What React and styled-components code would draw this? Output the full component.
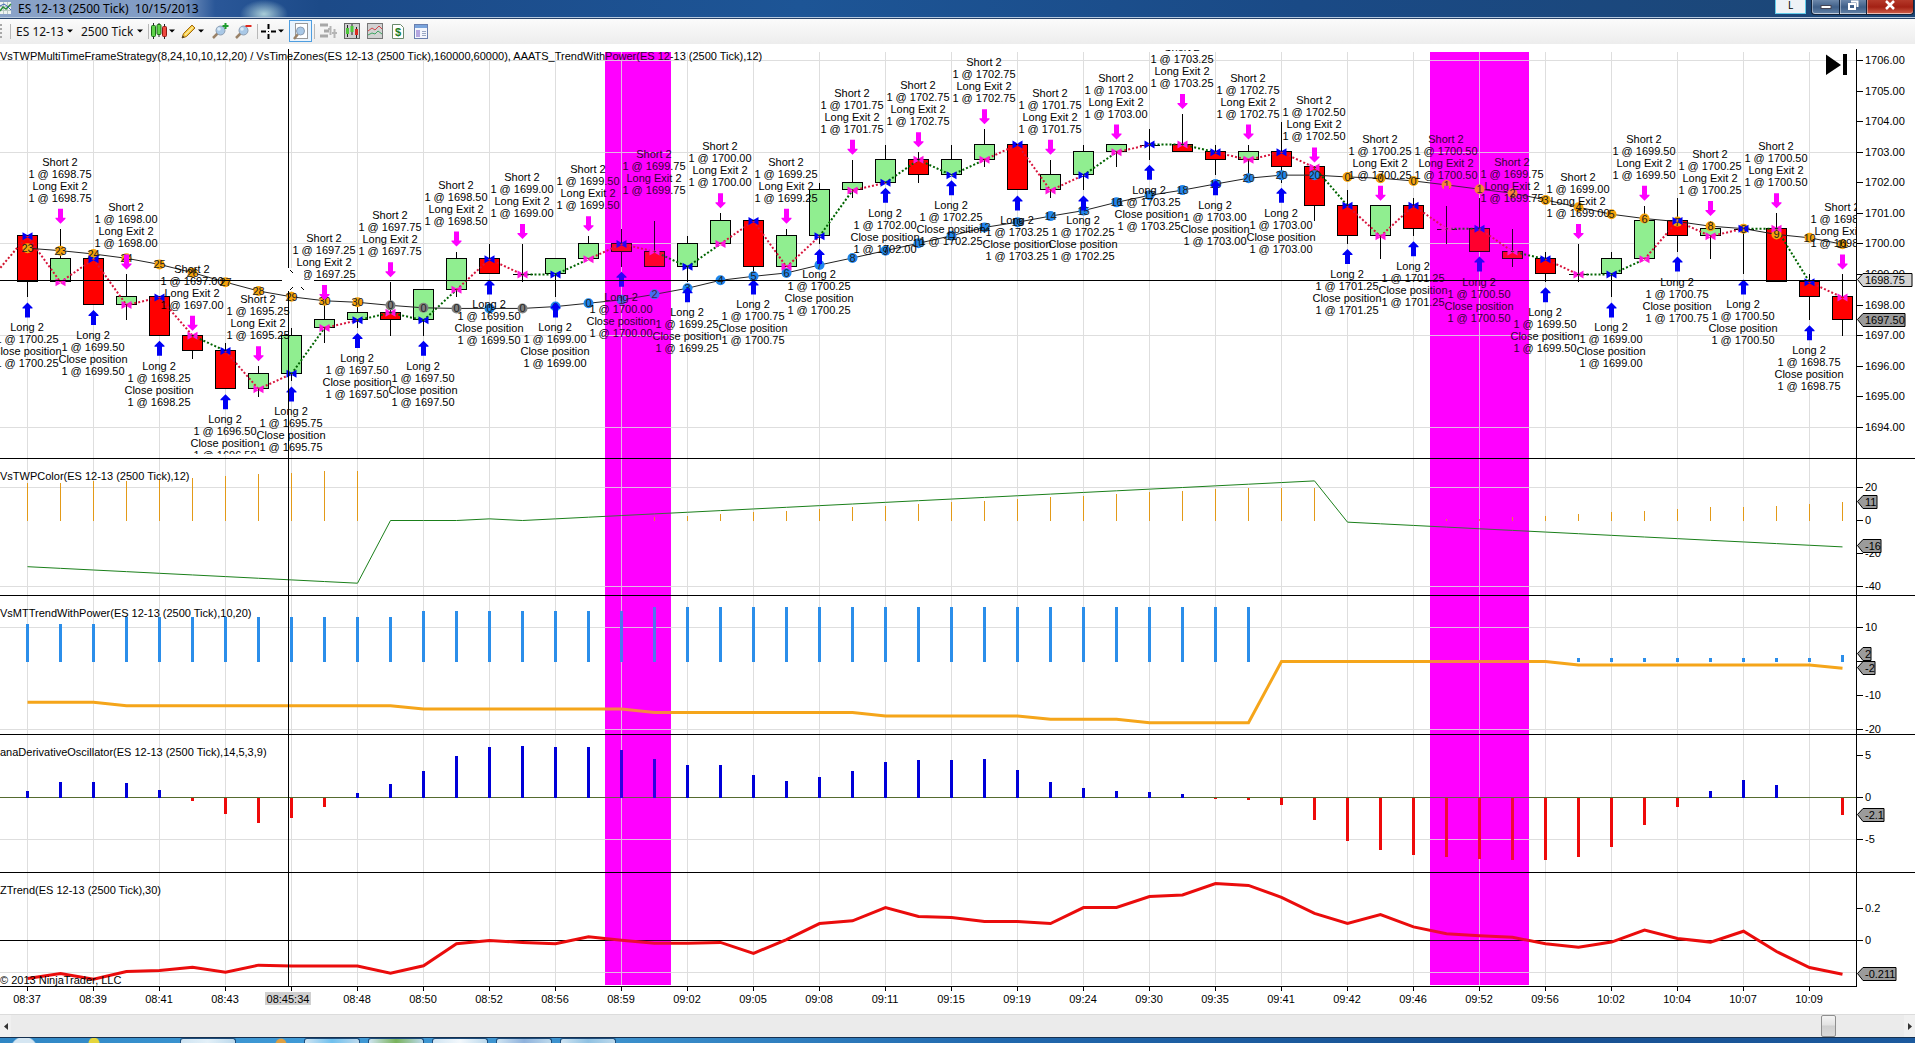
import styled, { createGlobalStyle } from 'styled-components'

const GlobalStyle = createGlobalStyle`
* {
  box-sizing: border-box;
}
body {
  margin: 0;
  background: #fff;
  overflow: hidden;
  font-family: "Liberation Sans", Arial, sans-serif;
  font-size: 11px;
  color: #000;
}
`

const Window = styled.div`
display: flex;
flex-direction: column;
min-height: 100vh;
`

const TitleBar = styled.header`
display: flex;
align-items: flex-start;
justify-content: space-between;
height: 19px;
border-bottom: 1px solid #27436a;
box-shadow: inset 0 -1px 0 #b9cbe0;
background:
  radial-gradient(ellipse 24px 14px at 264px 14px, #a9cdd8, transparent),
  linear-gradient(90deg, #8ba3c8 0, #7f9bc4 180px, #2a5798 215px, #1c4a88 320px, #1d5596 800px, #1a4a86 1300px, #1c4675 100%);
`

const Title = styled.h1`
display: flex;
align-items: center;
gap: 6px;
margin: 0;
height: 16px;
font: 12px "Noto Sans", sans-serif;
white-space: pre;
`

const WindowButtons = styled.div`
display: flex;
padding-right: 1px;
`

const LinkButton = styled.button`
width: 31px;
height: 14px;
margin-right: 5px;
padding: 0 0 3px;
border: 1px solid #62cdea;
border-top: 0;
background: #eef2f6;
font: 10px/10px "Noto Sans", sans-serif;
`

const CaptionButton = styled.button`
display: flex;
justify-content: center;
width: ${(p) => p.$width}px;
height: 15px;
padding: 0;
border: 1px solid #14233a;
border-top: 0;
border-left-width: ${(p) => (p.$first ? 1 : 0)}px;
border-radius: ${(p) => (p.$first ? '0 0 0 4px' : p.$close ? '0 0 4px 0' : 0)};
box-shadow: inset 0 -1px 0 rgba(255, 255, 255, 0.6), inset 1px 0 0 rgba(255, 255, 255, 0.4);
background: ${(p) =>
  p.$close
    ? 'linear-gradient(#b5392a, #a32114 50%, #d2604a)'
    : 'linear-gradient(#6c87aa, #3f5f88 50%, #6483a8)'};
`

const Toolbar = styled.div`
display: flex;
align-items: center;
height: 25px;
padding-bottom: 1px;
background: linear-gradient(#fbfbfb, #ededed);
`

const Grip = styled.span`
width: 2px;
height: 15px;
margin-right: 7px;
background: repeating-linear-gradient(#a8a8a8 0 2px, transparent 2px 4px);
`

const Separator = styled.span`
width: 1px;
height: 15px;
margin: 0 ${(p) => p.$gap}px;
background: #b8b8b8;
`

const Picker = styled.label`
display: flex;
align-items: center;
gap: 4px;
margin: 0 4px;
`

const Select = styled.select`
appearance: none;
width: ${(p) => p.$width}px;
padding: 0;
border: 0;
background: none;
color: #111;
font: 12px "Noto Sans", sans-serif;
`

const ToolButton = styled.button`
display: flex;
align-items: center;
justify-content: center;
gap: 2px;
min-width: 23px;
height: 22px;
margin-right: ${(p) => (p.$menu ? 4 : 0)}px;
padding: 0;
border: 1px solid ${(p) => (p.$active ? '#4f9ee0' : 'transparent')};
background: ${(p) => (p.$active ? '#eaf4fd' : 'none')};
`

const Charts = styled.main`
display: flex;
flex-direction: column;
`

const PaneRow = styled.section`
position: relative;
display: flex;
height: ${(p) => p.$height}px;
border-bottom: 1px solid #000;
`

const LastPaneRow = styled(PaneRow)`
border-bottom: 0;
`

const Plot = styled.svg`
flex: 1;
min-width: 0;
height: 100%;
font-size: 11px;
`

const Axis = styled.svg`
flex: none;
width: 59px;
height: 100%;
font-size: 11px;
`

const GoToLast = styled.button`
position: absolute;
top: 10px;
right: 68px;
width: 22px;
height: 22px;
padding: 0;
border: 0;
background: none;
`

const TimeAxis = styled.svg`
display: block;
width: 100%;
height: 27px;
font-size: 11px;
`

const ScrollRow = styled.div`
display: flex;
align-items: center;
height: 23px;
background: #ebebeb;
border-top: 1px solid #dcdcdc;
`

const ScrollArrow = styled.button`
display: flex;
align-items: center;
justify-content: center;
width: 11px;
height: 22px;
padding: 0;
border: 0;
background: #f0f0f0;
`

const ScrollRange = styled.input`
appearance: none;
flex: 1;
height: 22px;
margin: 0;
background: none;
&::-webkit-slider-thumb {
  appearance: none;
  width: 15px;
  height: 22px;
  border: 1px solid #8f8f8f;
  border-radius: 2px;
  background: linear-gradient(#f4f4f4, #e2e2e2 45%, #cfcfcf 50%, #dadada);
}
`

const Taskbar = styled.footer`
display: flex;
gap: 8px;
height: 6px;
padding-left: 180px;
border-top: 1px solid #16304f;
background:
  radial-gradient(circle 14px at 24px 12px, #d5e6f2 90%, transparent),
  radial-gradient(circle 6px at 94px 5px, #e5d63c 80%, transparent),
  radial-gradient(circle 6px at 281px 6px, #e0a040 80%, transparent),
  linear-gradient(90deg, #2f86c4, #3f9ad6 300px, #3b90cc 620px, #2168ad 1000px, #174f90 1500px, #1c5a9e);
`

const Task = styled.span`
width: 56px;
margin-left: ${(p) => p.$gap || 0}px;
border: 1px solid #1d4d7c;
border-bottom: 0;
border-radius: 3px 3px 0 0;
background: linear-gradient(90deg, #cfe4f2, ${(p) => p.$tint || '#8fc1e2'}, #bcd9ec);
`

// open, high, low, close
const bars = [
  [1700.25, 1700.25, 1698.25, 1698.75],
  [1698.75, 1700.5, 1698.75, 1699.5],
  [1699.5, 1699.5, 1698, 1698],
  [1698, 1699, 1697.5, 1698.25],
  [1698.25, 1698.25, 1697, 1697],
  [1697, 1697, 1696.25, 1696.5],
  [1696.5, 1696.75, 1695.25, 1695.25],
  [1695.25, 1696, 1695, 1695.75],
  [1695.75, 1697.25, 1695.5, 1697],
  [1697.25, 1698, 1696.75, 1697.5],
  [1697.5, 1698, 1697.25, 1697.75],
  [1697.75, 1698.75, 1697, 1697.5],
  [1697.5, 1698.5, 1697, 1698.5],
  [1698.5, 1699.75, 1698.25, 1699.5],
  [1699.5, 1700, 1699, 1699],
  [1699, 1700, 1698.75, 1699],
  [1699, 1699.5, 1698.25, 1699.5],
  [1699.5, 1700.25, 1699.5, 1700],
  [1700, 1700.5, 1699.25, 1699.75],
  [1699.75, 1700.75, 1699.25, 1699.25],
  [1699.25, 1700.25, 1698.75, 1700],
  [1700, 1701, 1700, 1700.75],
  [1700.75, 1700.75, 1699, 1699.25],
  [1699.25, 1700.5, 1699.25, 1700.25],
  [1700.25, 1702, 1700, 1701.75],
  [1701.75, 1702.75, 1701.5, 1702],
  [1702, 1703.25, 1702, 1702.75],
  [1702.75, 1703, 1702, 1702.25],
  [1702.25, 1703.25, 1702.25, 1702.75],
  [1702.75, 1703.75, 1702.5, 1703.25],
  [1703.25, 1703.25, 1701.75, 1701.75],
  [1701.75, 1702.75, 1701.5, 1702.25],
  [1702.25, 1703.25, 1701.75, 1703],
  [1703, 1703.25, 1702.5, 1703.25],
  [1703.25, 1703.75, 1702.75, 1703.25],
  [1703.25, 1704.25, 1703, 1703],
  [1703, 1703.25, 1702.25, 1702.75],
  [1702.75, 1703.25, 1702.25, 1703],
  [1703, 1704, 1702, 1702.5],
  [1702.5, 1702.5, 1700.75, 1701.25],
  [1701.25, 1701.75, 1700, 1700.25],
  [1700.25, 1701.25, 1699.5, 1701.25],
  [1701.25, 1701.5, 1700.25, 1700.5],
  [1700.5, 1701.25, 1700, 1700.5],
  [1700.5, 1701.5, 1699.75, 1699.75],
  [1699.75, 1700.5, 1699.25, 1699.5],
  [1699.5, 1699.75, 1698.75, 1699],
  [1699, 1700, 1698.75, 1699],
  [1699, 1699.75, 1698.25, 1699.5],
  [1699.5, 1701.25, 1699.5, 1700.75],
  [1700.75, 1701.5, 1699.75, 1700.25],
  [1700.25, 1700.75, 1699.5, 1700.5],
  [1700.5, 1700.5, 1699, 1700.5],
  [1700.5, 1701, 1698.75, 1698.75],
  [1698.75, 1699, 1697.5, 1698.25],
  [1698.25, 1699, 1697, 1697.5],
]

// long entries on even bars, short entries on odd bars
const entries = [
  1700.25, 1698.75, 1699.5, 1698, 1698.25, 1697, 1696.5, 1695.25, 1695.75, 1697.25,
  1697.5, 1697.75, 1697.5, 1698.5, 1699.5, 1699, 1699, 1699.5, 1700, 1699.75,
  1699.25, 1700, 1700.75, 1699.25, 1700.25, 1701.75, 1702, 1702.75, 1702.25, 1702.75,
  1703.25, 1701.75, 1702.25, 1703, 1703.25, 1703.25, 1703, 1702.75, 1703, 1702.5,
  1701.25, 1700.25, 1701.25, 1700.5, 1700.5, 1699.75, 1699.5, 1699, 1699, 1699.5,
  1700.75, 1700.25, 1700.5, 1700.5, 1698.75, 1698.25,
]

// L = losing leg, W = winning leg
const legs = 'LLLLLWLLWLWWWLLWWLLWWLLLWLWWWLLLWLWWLLLWLLLWLWLWWLLLWWL'

const average = [
  1699.86, 1699.78, 1699.67, 1699.53, 1699.33, 1699.06, 1698.75, 1698.46, 1698.27, 1698.14,
  1698.09, 1697.99, 1697.91, 1697.89, 1697.89, 1697.89, 1697.95, 1698.06, 1698.17, 1698.35,
  1698.55, 1698.81, 1698.94, 1699.05, 1699.31, 1699.54, 1699.78, 1700.02, 1700.27, 1700.54,
  1700.71, 1700.91, 1701.09, 1701.36, 1701.59, 1701.76, 1701.96, 1702.15, 1702.25, 1702.25,
  1702.19, 1702.15, 1702.06, 1701.93, 1701.79, 1701.66, 1701.44, 1701.2, 1700.97, 1700.83,
  1700.73, 1700.58, 1700.5, 1700.31, 1700.2, 1699.99,
]

const power = [
  23, 23, 24, 24, 25, 26, 27, 28, 29, 30, 30, 0, 0, 0, 0, 0, 0, 0, 1, 2,
  3, 4, 5, 6, 7, 8, 9, 10, 11, 12, 13, 14, 15, 16, 17, 18, 19, 20, 20, 20,
  0, 0, 0, 1, 1, 2, 3, 4, 5, 6, 7, 8, 8, 9, 10, 11,
]

const powerLine = power.map((_, i) => (i <= 10 ? -28 - i : i <= 13 ? 0 : i === 14 ? 1 : i <= 39 ? i - 15 : 39 - i))

const repeat = (runs) => runs.flatMap(([value, count]) => Array(count).fill(value))
const trendBars = repeat([[11, 3], [13, 9], [15, 7], [16, 19], [0, 9], [1, 8], [2, 1]])
const trendLine = repeat([[-12, 3], [-13, 9], [-14, 7], [-15, 7], [-16, 5], [-17, 3], [-18, 4], [0, 9], [-1, 8], [-2, 1]])

const oscillator = [
  0.8, 1.9, 1.9, 1.75, 0.9, -0.4, -2, -3, -2.4, -1.1, 0.5, 1.6, 3.1, 5, 6, 6.1, 6, 6, 5.6, 4.6,
  3.85, 3.85, 2.7, 1.95, 2.4, 3.1, 4.2, 4.45, 4.45, 4.6, 3.25, 1.8, 1.1, 0.75, 0.65, 0.4, -0.2, -0.3, -0.9, -2.7,
  -5.2, -6.2, -6.9, -7.1, -7.3, -7.4, -7.4, -7.1, -5.9, -3.3, -1.1, 0.75, 2.1, 1.5, -0.1, -2.1,
]

const zTrend = [
  -0.237, -0.206, -0.242, -0.194, -0.187, -0.167, -0.198, -0.154, -0.16, -0.16, -0.16, -0.204, -0.158, -0.02,
  0, -0.012, -0.02, 0.023, 0.002, -0.017, -0.017, -0.012, -0.08, 0.006, 0.106, 0.123, 0.206, 0.15,
  0.144, 0.119, 0.119, 0.106, 0.206, 0.206, 0.275, 0.285, 0.356, 0.344, 0.27, 0.169, 0.106, 0.162,
  0.085, 0.042, 0.03, 0.02, -0.02, -0.042, -0.01, 0.065, 0.013, -0.01, 0.058, -0.069, -0.169, -0.211,
]

const times = [
  '08:37', '08:39', '08:41', '08:43', '', '08:48', '08:50', '08:52', '08:56', '08:59',
  '09:02', '09:05', '09:08', '09:11', '09:15', '09:19', '09:24', '09:30', '09:35', '09:41',
  '09:42', '09:46', '09:52', '09:56', '10:02', '10:04', '10:07', '10:09',
]

const zones = [[18, 19], [43, 45]]

const BLUE = '#0000f5'
const PINK = '#ff00ff'

const barX = (i) => 27 + 33 * i
const priceY = (p) => 16.5 + (1706 - p) * 30.57
const powerY = (v) => 61.5 - v * 1.65
const trendY = (v) => 65.5 - v * 3.4
const oscY = (v) => 62.5 - v * 8.4
const zY = (v) => 67.5 - v * 160

const points = (values, y) => values.map((v, i) => `${barX(i) + 0.5},${y(v)}`).join(' ')

const Zones = ({ top, height, opacity }) =>
  zones.map(([from, to]) => (
    <rect key={from} x={barX(from) - 16} y={top} width={33 * (to - from + 1)} height={height} fill={PINK} opacity={opacity} />
  ))

const Pane = ({ height, top = 0, bottom = height, label, grid, y, ticks, format, tags, last, overlay, children }) => {
  const Row = last ? LastPaneRow : PaneRow
  return (
    <Row $height={height}>
      <Plot role="img" aria-label={label}>
        <Zones top={top} height={bottom - top} />
        <g stroke="#dedede" shapeRendering="crispEdges">
          {times.map((_, i) => (
            <line key={i} x1={barX(i * 2) + 0.5} x2={barX(i * 2) + 0.5} y1={top} y2={bottom} />
          ))}
          {grid.map((v) => (
            <line key={v} x1="0" x2="100%" y1={y(v)} y2={y(v)} />
          ))}
        </g>
        {children}
        <text x="0" y={top ? 16 : 21}>{label}</text>
        <Zones top={top} height={bottom - top} opacity="0.18" />
        <line x1="288.5" x2="288.5" y1={top ? 5 : 0} y2={height} stroke="#000" shapeRendering="crispEdges" />
        {overlay}
      </Plot>
      <Axis>
        <line x1="0.5" x2="0.5" y1={top ? 5 : 0} y2={height} stroke="#000" shapeRendering="crispEdges" />
        {ticks.map((v) => (
          <g key={v}>
            <line x1="1" x2="7" y1={y(v)} y2={y(v)} stroke="#000" shapeRendering="crispEdges" />
            <text x="9" y={Math.floor(y(v)) + 4}>{format ? format(v) : v}</text>
          </g>
        ))}
        {tags.map(({ value, text, width, fill = '#9b9b9b' }) => (
          <g key={text} transform={`translate(1 ${Math.floor(y(value)) - 0.5})`}>
            <path d={`M0.5 0 L6 -6 H${width} V7 H6 Z`} fill={fill} stroke="#000" />
            <text x="8" y="4">{text}</text>
          </g>
        ))}
      </Axis>
      {top > 0 && (
        <GoToLast aria-label="Go to last bar">
          <svg width="22" height="22">
            <path d="M1 0.5 L16 11 L1 21 Z M18 0 H22 V21 H18 Z" />
          </svg>
        </GoToLast>
      )}
    </Row>
  )
}

const Histogram = ({ values, y, width, color, negative }) => (
  <g shapeRendering="crispEdges">
    {values.map((v, i) => v !== 0 && (
      <rect
        key={i}
        x={barX(i) - (width - 1) / 2}
        y={Math.min(y(v), y(0))}
        width={width}
        height={Math.abs(y(v) - y(0))}
        fill={v < 0 ? negative : color}
      />
    ))}
  </g>
)

const Candle = ({ i, bar }) => {
  const [open, high, low, close] = bar
  const x = barX(i) + 0.5
  const top = Math.round(priceY(Math.max(open, close)))
  const bottom = Math.round(priceY(Math.min(open, close)))
  return (
    <g stroke="#000" shapeRendering="crispEdges">
      <line x1={x} x2={x} y1={priceY(high)} y2={priceY(low)} />
      {open === close ? (
        <line x1={x - 10} x2={x + 10} y1={top + 0.5} y2={top + 0.5} />
      ) : (
        <rect x={x - 10} y={top - 0.5} width="20" height={bottom - top} fill={close > open ? '#90ee90' : '#ff0000'} />
      )}
    </g>
  )
}

const Entry = ({ i, price, bar }) => {
  const isLong = i % 2 === 0
  const x = barX(i) + 0.5
  const y = priceY(price)
  const arrowY = isLong ? priceY(bar[2]) + 5 : priceY(bar[1]) - 5
  const d = isLong ? 1 : -1
  const textY = Math.round(isLong ? arrowY + 29 : arrowY - 58)
  const value = `1 @ ${price.toFixed(2)}`
  const lines = isLong ? ['Long 2', value, 'Close position', value] : ['Short 2', value, 'Long Exit 2', value]
  return (
    <g>
      <path
        d={`M${x - 5} ${y - 4} L${x + 2} ${y} L${x - 5} ${y + 4} Z M${x + 5} ${y - 4} L${x - 2} ${y} L${x + 5} ${y + 4} Z`}
        fill={isLong ? BLUE : '#ff14dc'}
      />
      <path
        d={`M${x} ${arrowY} l5 ${5 * d} v${d} h-2.5 v${9 * d} h-5 v${-9 * d} h-2.5 v${-d} Z`}
        fill={isLong ? BLUE : PINK}
      />
      <g textAnchor="middle" clipPath="url(#price-clip)">
        {lines.map((line, n) => (
          <text key={n} x={barX(i)} y={textY + n * 12}>{line}</text>
        ))}
      </g>
    </g>
  )
}

const averageColor = (i) => {
  if (i <= 10 || i >= 40) return '#f5a30a'
  return [11, 12, 13, 15].includes(i) ? '#808080' : '#1e86ee'
}

const PricePane = () => (
  <Pane
    height={415}
    top={8}
    label="VsTWPMultiTimeFrameStrategy(8,24,10,10,12,20) / VsTimeZones(ES 12-13 (2500 Tick),160000,60000), AAATS_TrendWithPower(ES 12-13 (2500 Tick),12)"
    y={priceY}
    grid={[1706, 1703, 1700, 1697, 1694]}
    ticks={[1706, 1705, 1704, 1703, 1702, 1701, 1700, 1699, 1698, 1697, 1696, 1695, 1694]}
    format={(v) => v.toFixed(2)}
    tags={[
      { value: 1698.8, text: '1698.75', width: 55, fill: '#d3d3d3' },
      { value: 1697.5, text: '1697.50', width: 48 },
    ]}
    overlay={
      <>
        <rect x="282" y="224" width="22" height="23" fill="#fff" />
        <path d="M290 226 l3 3 M290 246 l3 -3 M301 243 l3 3" stroke="#000" />
        <g stroke="#000" shapeRendering="crispEdges">
          <line x1="0" x2="282" y1="236.5" y2="236.5" />
          <line x1="314" x2="100%" y1="236.5" y2="236.5" />
        </g>
      </>
    }
  >
    <clipPath id="price-clip">
      <rect x="0" y="6" width="100%" height="404" />
    </clipPath>
    {bars.map((bar, i) => <Candle key={i} i={i} bar={bar} />)}
    <g strokeWidth="2" strokeDasharray="2 2">
      <line x1="-10" x2="27" y1="236" y2={priceY(1700.25)} stroke="#d0142c" />
      {entries.slice(1).map((price, i) => (
        <line
          key={i}
          x1={barX(i) + 0.5}
          x2={barX(i + 1) + 0.5}
          y1={priceY(entries[i])}
          y2={priceY(price)}
          stroke={legs[i] === 'L' ? '#d8143c' : '#006400'}
        />
      ))}
    </g>
    <polyline points={points(average, priceY)} fill="none" stroke="#222" />
    {average.map((p, i) => (
      <g key={i}>
        <circle cx={barX(i) + 0.5} cy={priceY(p)} r="5" fill={averageColor(i)} />
        <text x={barX(i) + 0.5} y={priceY(p) + 4} textAnchor="middle" fill="#222">{power[i]}</text>
      </g>
    ))}
    {entries.map((price, i) => <Entry key={i} i={i} price={price} bar={bars[i]} />)}
  </Pane>
)

const Caret = () => (
  <svg width="6" height="4"><path d="M0 0.5 H6 L3 3.5 Z" /></svg>
)

const Lens = ({ children }) => (
  <svg width="17" height="16">
    <path d="M1 15 L6 10" stroke="#9a8268" strokeWidth="2.5" />
    <circle cx="8.5" cy="7.5" r="4.5" fill="#a9c8e6" stroke="#8b9db2" />
    <circle cx="7" cy="6" r="1.8" fill="#dcecf8" />
    {children}
  </svg>
)

const CandlesIcon = () => (
  <svg width="16" height="16">
    <path d="M2.5 0 V16 M8 0 V14 M13.5 1 V16" stroke="#222" />
    <rect x="0.5" y="2.5" width="4" height="11" rx="1" fill="#5fd44a" stroke="#1d6b18" />
    <rect x="6" y="1.5" width="4" height="10" rx="1" fill="#5fd44a" stroke="#1d6b18" />
    <rect x="11.5" y="3.5" width="4" height="10" rx="1" fill="#ee4a40" stroke="#8e1812" />
  </svg>
)

const PencilIcon = () => (
  <svg width="15" height="15">
    <path d="M1 14 L2.5 9.5 L11 1 L14 4 L5.5 12.5 Z" fill="#f6c83c" stroke="#a06a14" />
    <path d="M4 11 L12 3" stroke="#fdeba0" strokeWidth="1.5" />
    <path d="M1 14 L1.8 11.5 L3.5 13.2 Z" fill="#333" />
  </svg>
)

const TopBar = () => (
  <Toolbar>
    <Grip />
    <Separator $gap={1} />
    <Picker>
      <Select $width={47} aria-label="Instrument"><option>ES 12-13</option></Select>
      <Caret />
    </Picker>
    <Picker>
      <Select $width={52} aria-label="Interval"><option>2500 Tick</option></Select>
      <Caret />
    </Picker>
    <Separator $gap={1} />
    <ToolButton $menu aria-label="Chart style"><CandlesIcon /><Caret /></ToolButton>
    <ToolButton $menu aria-label="Drawing tools"><PencilIcon /><Caret /></ToolButton>
    <ToolButton aria-label="Zoom in">
      <Lens><path d="M13.5 0 V6 M10.5 3 H16.5" stroke="#1e9c2c" strokeWidth="2" /></Lens>
    </ToolButton>
    <ToolButton aria-label="Zoom out">
      <Lens><path d="M10.5 3 H16.5" stroke="#e0281e" strokeWidth="2" /></Lens>
    </ToolButton>
    <Separator $gap={2} />
    <ToolButton $menu aria-label="Cursor">
      <svg width="15" height="15">
        <path d="M7.5 0 V5 M7.5 10 V15 M0 7.5 H5 M10 7.5 H15" stroke="#000" strokeWidth="2" />
        <rect x="7" y="7" width="1" height="1" />
      </svg>
      <Caret />
    </ToolButton>
    <ToolButton $active aria-label="Data box">
      <svg width="16" height="17">
        <rect x="2.5" y="0.5" width="12" height="15" fill="#fff" stroke="#999" />
        <path d="M1 16 L5 11" stroke="#9a8268" strokeWidth="2.5" />
        <circle cx="7.5" cy="8" r="4" fill="#a9c8e6" stroke="#8b9db2" />
      </svg>
    </ToolButton>
    <Separator $gap={2} />
    <ToolButton aria-label="Chart trader">
      <svg width="17" height="16">
        <path d="M0 2 H8 M4 8 H9 M0 13 H8" stroke="#a8a8a8" strokeWidth="3" />
        <path d="M10.5 3 V12 M14.5 6 V15 M8 6 H10 M12 10 H17" stroke="#b5b5b5" strokeWidth="2" />
      </svg>
    </ToolButton>
    <ToolButton aria-label="Data series">
      <svg width="16" height="16">
        <rect x="0.5" y="0.5" width="15" height="15" fill="#cfcfcf" stroke="#666" />
        <path d="M3.5 2 V14 M8 1 V12 M12.5 4 V15" stroke="#222" />
        <rect x="2" y="5" width="3" height="6" fill="#4fc83c" />
        <rect x="6.5" y="3" width="3" height="6" fill="#4fc83c" />
        <rect x="11" y="6" width="3" height="6" fill="#d92c22" />
      </svg>
    </ToolButton>
    <ToolButton aria-label="Indicators">
      <svg width="16" height="16">
        <rect x="0.5" y="0.5" width="15" height="15" fill="#d2d2d2" stroke="#777" />
        <path d="M1 8 L5 5 L8 7 L12 3 L15 6" stroke="#d0474a" fill="none" />
        <path d="M1 12 L5 10 L8 11 L11 8 L15 11" stroke="#3fa564" fill="none" />
      </svg>
    </ToolButton>
    <ToolButton aria-label="Strategies">
      <svg width="12" height="15">
        <path d="M0.5 0.5 H8.5 L11.5 3.5 V14.5 H0.5 Z" fill="#fff" stroke="#6b8a6b" />
        <text x="6" y="12" textAnchor="middle" fontSize="11" fontWeight="bold" fill="#1b7c22">$</text>
      </svg>
    </ToolButton>
    <ToolButton aria-label="Properties">
      <svg width="14" height="15">
        <rect x="0.5" y="0.5" width="13" height="14" fill="#f4f6fc" stroke="#6a7fae" />
        <rect x="1" y="1" width="12" height="3" fill="#7aa4dc" />
        <rect x="2" y="6" width="4" height="7" fill="#b4a6e0" />
        <path d="M8 7.5 H12 M8 9.5 H12 M8 11.5 H12" stroke="#9aa8c4" />
      </svg>
    </ToolButton>
  </Toolbar>
)

const App = () => {
  return (
    <Window>
      <GlobalStyle />
      <TitleBar>
        <Title>
          <svg width="12" height="14">
            <rect x="0" y="1" width="11" height="12" fill="#eef3f0" />
            <path d="M0 5.5 H11 M0 9.5 H11 M3.5 1 V13 M7.5 1 V13" stroke="#b9c9c4" />
            <path d="M0 10 L3 6 L6 8 L11 3" stroke="#2b8c3c" strokeWidth="1.5" fill="none" />
            <path d="M0 5 L4 3 L7 5 L11 9" stroke="#3d62b4" fill="none" />
          </svg>
          {'ES 12-13 (2500 Tick)  10/15/2013'}
        </Title>
        <WindowButtons>
          <LinkButton>L</LinkButton>
          <CaptionButton $width={29} $first aria-label="Minimize">
            <svg width="12" height="12"><rect x="1" y="5.5" width="10" height="3" fill="#fff" stroke="#445" /></svg>
          </CaptionButton>
          <CaptionButton $width={27} aria-label="Restore">
            <svg width="12" height="12">
              <path d="M4 1.5 H10.5 V7" stroke="#fff" strokeWidth="2" fill="none" />
              <rect x="2" y="4" width="6" height="5" stroke="#fff" strokeWidth="2" fill="none" />
            </svg>
          </CaptionButton>
          <CaptionButton $width={47} $close aria-label="Close">
            <svg width="12" height="12"><path d="M2 1 L10 9 M10 1 L2 9" stroke="#fff" strokeWidth="2.5" /></svg>
          </CaptionButton>
        </WindowButtons>
      </TitleBar>
      <TopBar />
      <Charts>
        <PricePane />
        <Pane
          height={137}
          label="VsTWPColor(ES 12-13 (2500 Tick),12)"
          y={powerY}
          grid={[20, -40]}
          ticks={[20, 0, -20, -40]}
          tags={[{ value: 11, text: '11', width: 20 }, { value: -16, text: '-16', width: 24 }]}
        >
          <Histogram values={power.map((v, i) => (i === 18 ? 0 : v))} y={powerY} width={1} color="#e39a18" />
          <polyline points={points(powerLine, powerY)} fill="none" stroke="#1a7f1a" />
        </Pane>
        <Pane
          height={139}
          label="VsMTTrendWithPower(ES 12-13 (2500 Tick),10,20)"
          y={trendY}
          grid={[10, -20]}
          ticks={[10, 0, -10, -20]}
          tags={[{ value: 2, text: '2', width: 14 }, { value: -2, text: '-2', width: 18 }]}
        >
          <Histogram values={trendBars} y={trendY} width={3} color="#2b8eea" />
          <polyline points={points(trendLine, trendY)} fill="none" stroke="#f5a51a" strokeWidth="3" />
        </Pane>
        <Pane
          height={138}
          label="anaDerivativeOscillator(ES 12-13 (2500 Tick),14,5,3,9)"
          y={oscY}
          grid={[-5]}
          ticks={[5, 0, -5]}
          tags={[{ value: -2.1, text: '-2.1', width: 27 }]}
        >
          <line x1="0" x2="100%" y1={oscY(0)} y2={oscY(0)} stroke="#556b2f" shapeRendering="crispEdges" />
          <Histogram values={oscillator} y={oscY} width={3} color="#0000d8" negative="#ee0a0a" />
        </Pane>
        <Pane
          height={114}
          bottom={112}
          last
          label="ZTrend(ES 12-13 (2500 Tick),30)"
          y={zY}
          grid={[-0.2]}
          ticks={[0.2, 0]}
          tags={[{ value: -0.211, text: '-0.211', width: 39 }]}
          overlay={<line x1="0" x2="100%" y1="113.5" y2="113.5" stroke="#000" shapeRendering="crispEdges" />}
        >
          <line x1="0" x2="100%" y1={zY(0)} y2={zY(0)} stroke="#000" shapeRendering="crispEdges" />
          <polyline points={points(zTrend, zY)} fill="none" stroke="#ea0c0c" strokeWidth="3" />
          <text x="0" y="111">© 2013 NinjaTrader, LLC</text>
        </Pane>
        <TimeAxis>
          <rect x="265" y="5" width="46" height="13" fill="#d0d0d0" />
          <text x="288" y="16" textAnchor="middle">08:45:34</text>
          {times.map((time, i) => (
            <g key={i}>
              <line x1={barX(i * 2) + 0.5} x2={barX(i * 2) + 0.5} y1="0" y2="4" stroke="#000" shapeRendering="crispEdges" />
              <text x={barX(i * 2)} y="16" textAnchor="middle">{time}</text>
            </g>
          ))}
        </TimeAxis>
      </Charts>
      <ScrollRow>
        <ScrollArrow aria-label="Scroll left"><svg width="4" height="7"><path d="M4 0 V7 L0 3.5 Z" fill="#333" /></svg></ScrollArrow>
        <ScrollRange type="range" min="0" max="100" step="0.1" defaultValue="96.4" aria-label="Chart position" />
        <ScrollArrow aria-label="Scroll right"><svg width="4" height="7"><path d="M0 0 V7 L4 3.5 Z" fill="#333" /></svg></ScrollArrow>
      </ScrollRow>
      <Taskbar>
        <Task $tint="#e3f0f8" />
        <Task $gap={60} $tint="#6fc0ee" />
        <Task $tint="#79b35c" />
        <Task $tint="#f3f8fc" />
        <Task $tint="#8fb2dc" />
        <Task />
      </Taskbar>
    </Window>
  )
}

export default App
